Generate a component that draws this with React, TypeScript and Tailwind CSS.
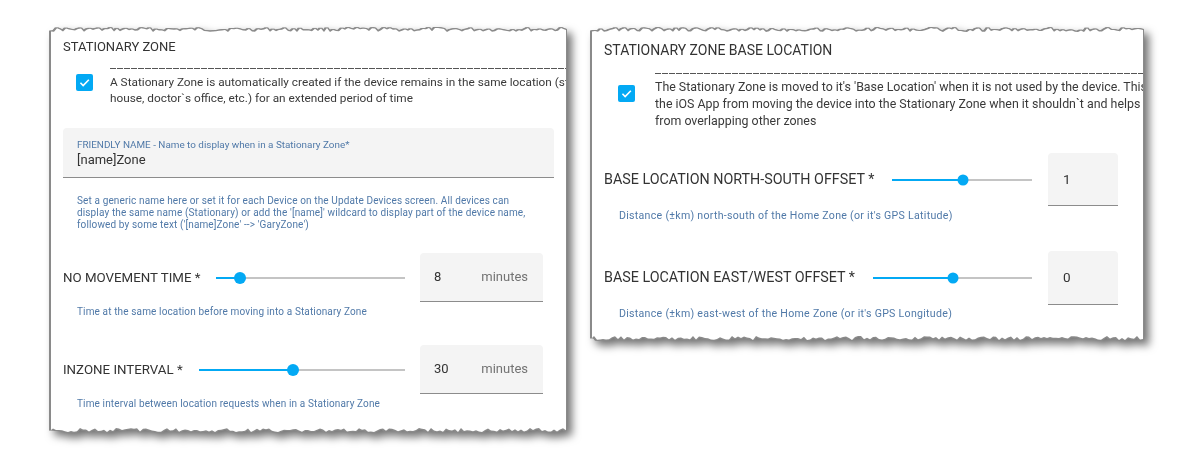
import React from "react";

// torn paper edge along top and bottom, computed once per panel
function tornEdge(w: number, h: number, seed: number) {
	let s = seed;
	const rnd = () => {
		s = (s * 9301 + 49297) % 233280;
		return s / 233280;
	};
	const pts: string[] = [];
	for (let x = 0; x <= w; x += 3) pts.push(`${x}px ${(rnd() * 4).toFixed(1)}px`);
	pts.push(`${w}px 2px`, `${w}px ${h - 2}px`);
	for (let x = w; x >= 0; x -= 3) pts.push(`${x}px ${(h - rnd() * 4).toFixed(1)}px`);
	pts.push(`0px ${h - 2}px`);
	return `polygon(${pts.join(",")})`;
}

function Panel({
	className,
	w,
	h,
	seed,
	children,
}: {
	className: string;
	w: number;
	h: number;
	seed: number;
	children: React.ReactNode;
}) {
	return (
		<div className="shrink-0 [filter:drop-shadow(-2px_0_0_#8a8a8a)_drop-shadow(0_-1px_0_#8a8a8a)_drop-shadow(1px_0_0_#8a8a8a)_drop-shadow(0_1px_0_#8a8a8a)_drop-shadow(5px_5px_4px_rgba(0,0,0,0.55))]">
			<div
				className={`overflow-hidden bg-white font-['Roboto',sans-serif] ${className}`}
				style={{ clipPath: tornEdge(w, h, seed) }}
			>
				{children}
			</div>
		</div>
	);
}

function Check({ className }: { className: string }) {
	return (
		<div
			className={`flex h-[17px] w-[17px] shrink-0 items-center justify-center rounded-[2px] bg-[#03a9f4] ${className}`}
		>
			<svg width="13" height="13" viewBox="0 0 24 24">
				<path
					d="M4.5 12.5l5 5L20 7"
					fill="none"
					stroke="white"
					strokeWidth="3"
				/>
			</svg>
		</div>
	);
}

function Slider({
	className,
	pos,
	thumb,
}: {
	className: string;
	pos: number;
	thumb: number;
}) {
	return (
		<div className={`relative h-[14px] shrink-0 ${className}`}>
			<div className="absolute inset-x-0 top-[6px] h-[2px] bg-[#c4c4c4]" />
			<div
				className="absolute left-0 top-[6px] h-[2px] bg-[#03a9f4]"
				style={{ width: pos }}
			/>
			<div
				className="absolute top-1/2 -translate-x-1/2 -translate-y-1/2 rounded-full bg-[#03a9f4]"
				style={{ left: pos, width: thumb, height: thumb }}
			/>
		</div>
	);
}

export default function App() {
	return (
		<div className="flex h-[457px] w-[1200px] items-start gap-[26px] bg-white pl-[51px] pt-[28px]">
			{/* left screenshot */}
			<Panel className="h-[404px] w-[515px]" w={515} h={404} seed={17}>
				<div className="flex h-[38px] items-center px-[12px] text-[13px] text-[#333]">
					STATIONARY ZONE
				</div>
				<div className="ml-[59px] mt-[2px] h-px bg-[repeating-linear-gradient(90deg,#555_0_6px,transparent_6px_7px)]" />
				<div className="mt-[5px] flex pl-[25px]">
					<Check className="mt-0" />
					<div className="ml-[17px] whitespace-nowrap text-[11.8px] leading-[16px] text-[#3a3a3a]">
						<div>
							A Stationary Zone is automatically created if the device remains in
							the same location (store, friend`s
						</div>
						<div>house, doctor`s office, etc.) for an extended period of time</div>
					</div>
				</div>

				<div className="mx-[12px] mt-[22px] h-[50px] rounded-t-[4px] border-b border-[#8c8c8c] bg-[#f4f4f4] pl-[14px] pt-[11px]">
					<div className="text-[9.9px] leading-[12px] text-[#5079a8]">
						FRIENDLY NAME - Name to display when in a Stationary Zone*
					</div>
					<div className="mt-px text-[13px] leading-[16px] text-[#333]">
						[name]Zone
					</div>
				</div>
				<div className="mt-[17px] pl-[26px] text-[10px] leading-[12px] tracking-[0.13px] text-[#5079a8]">
					<div>
						Set a generic name here or set it for each Device on the Update Devices
						screen. All devices can
					</div>
					<div>
						display the same name (Stationary) or add the '[name]' wildcard to
						display part of the device name,
					</div>
					<div>followed by some text ('[name]Zone' --&gt; 'GaryZone')</div>
				</div>

				<div className="mt-[22px] flex h-[49px] items-center pl-[12px] pr-[23px]">
					<div className="text-[13.3px] text-[#333]">NO MOVEMENT TIME *</div>
					<div className="flex-1" />
					<Slider className="mr-[15px] w-[189px]" pos={24} thumb={12} />
					<div className="flex h-full w-[123px] items-center justify-between rounded-t-[4px] border-b border-[#8c8c8c] bg-[#f4f4f4] pl-[14px] pr-[15px] text-[13px]">
						<span className="text-[#333]">8</span>
						<span className="text-[#737373]">minutes</span>
					</div>
				</div>
				<div className="mt-[4px] pl-[26px] text-[10px] leading-[12px] tracking-[0.13px] text-[#5079a8]">
					Time at the same location before moving into a Stationary Zone
				</div>

				<div className="mt-[27px] flex h-[49px] items-center pl-[12px] pr-[23px]">
					<div className="text-[13.3px] text-[#333]">INZONE INTERVAL *</div>
					<div className="flex-1" />
					<Slider className="mr-[15px] w-[206px]" pos={94} thumb={12} />
					<div className="flex h-full w-[123px] items-center justify-between rounded-t-[4px] border-b border-[#8c8c8c] bg-[#f4f4f4] pl-[14px] pr-[15px] text-[13px]">
						<span className="text-[#333]">30</span>
						<span className="text-[#737373]">minutes</span>
					</div>
				</div>
				<div className="mt-[4px] pl-[26px] text-[10px] leading-[12px] tracking-[0.13px] text-[#5079a8]">
					Time interval between location requests when in a Stationary Zone
				</div>
			</Panel>

			{/* right screenshot */}
			<Panel className="h-[312px] w-[551px]" w={551} h={312} seed={91}>
				<div className="flex h-[44px] items-center px-[12px] text-[14px] text-[#333]">
					STATIONARY ZONE BASE LOCATION
				</div>
				<div className="ml-[63px] mt-px h-px bg-[repeating-linear-gradient(90deg,#555_0_6px,transparent_6px_7px)]" />
				<div className="mt-[4px] flex pl-[26px]">
					<Check className="mt-[7px]" />
					<div className="ml-[20px] whitespace-nowrap text-[12.4px] leading-[17px] text-[#3a3a3a]">
						<div>
							The Stationary Zone is moved to it's 'Base Location' when it is not
							used by the device. This prevents
						</div>
						<div>
							the iOS App from moving the device into the Stationary Zone when it
							shouldn`t and helps prevent it
						</div>
						<div>from overlapping other zones</div>
					</div>
				</div>

				<div className="mt-[24px] flex h-[53px] items-center pl-[12px] pr-[25px]">
					<div className="text-[14.3px] text-[#333]">
						BASE LOCATION NORTH-SOUTH OFFSET *
					</div>
					<div className="flex-1" />
					<Slider className="mr-[16px] w-[140px]" pos={71} thumb={11} />
					<div className="flex h-full w-[70px] items-center rounded-t-[4px] border-b border-[#8c8c8c] bg-[#f4f4f4] pl-[15px] text-[13.5px] text-[#333]">
						1
					</div>
				</div>
				<div className="mt-[4px] pl-[27px] text-[10.6px] leading-[12px] tracking-[0.28px] text-[#5079a8]">
					Distance (±km) north-south of the Home Zone (or it's GPS Latitude)
				</div>

				<div className="mt-[29px] flex h-[54px] items-center pl-[12px] pr-[25px]">
					<div className="text-[14.3px] text-[#333]">
						BASE LOCATION EAST/WEST OFFSET *
					</div>
					<div className="flex-1" />
					<Slider className="mr-[16px] w-[159px]" pos={80} thumb={11} />
					<div className="flex h-full w-[70px] items-center rounded-t-[4px] border-b border-[#8c8c8c] bg-[#f4f4f4] pl-[15px] text-[13.5px] text-[#333]">
						0
					</div>
				</div>
				<div className="mt-[3px] pl-[27px] text-[10.6px] leading-[12px] tracking-[0.28px] text-[#5079a8]">
					Distance (±km) east-west of the Home Zone (or it's GPS Longitude)
				</div>
			</Panel>
		</div>
	);
}
